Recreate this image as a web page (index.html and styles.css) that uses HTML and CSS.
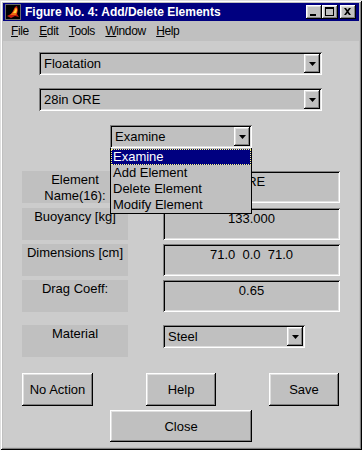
FILE: index.html
```html
<!DOCTYPE html>
<html lang="en">
<head>
    <meta charset="UTF-8">
    <title>Figure No. 4: Add/Delete Elements</title>
    <link rel="stylesheet" href="styles.css">
</head>
<body>
    <div class="window">
        <div class="titlebar">
            <svg class="app-icon" width="16" height="16" viewBox="0 0 16 16">
                <rect x="0.5" y="0.5" width="15" height="15" fill="#000" stroke="#6a6a6a"/>
                <polygon points="2,12 6,10 8,7 10,3 12,2 13,6 12,10 14,13 10,12 6,14" fill="#c81e10"/>
                <polygon points="5,11 8,8 10,4 12,4 12,8 11,11 8,11" fill="#f26a10"/>
                <polygon points="8,9 10,6 11,4 12,6 11,9" fill="#ffd23a"/>
            </svg>
            <span class="title">Figure No. 4: Add/Delete Elements</span>
            <div class="caption-btns">
                <span class="cap-btn">
                    <svg width="16" height="14" viewBox="0 0 16 14"><rect x="4" y="9" width="6" height="2" fill="#000"/></svg>
                </span>
                <span class="cap-btn">
                    <svg width="16" height="14" viewBox="0 0 16 14"><path d="M3 2h9v9h-9z M4 4v6h7v-6z" fill="#000" fill-rule="evenodd"/></svg>
                </span>
                <span class="cap-btn gap">
                    <svg width="16" height="14" viewBox="0 0 16 14"><path d="M4 3h2l1.5 2 1.5-2h2l-2.5 3.5 2.5 3.5h-2l-1.5-2-1.5 2h-2l2.5-3.5z" fill="#000"/></svg>
                </span>
            </div>
        </div>

        <div class="menubar">
            <span class="menu"><u>F</u>ile</span>
            <span class="menu"><u>E</u>dit</span>
            <span class="menu"><u>T</u>ools</span>
            <span class="menu"><u>W</u>indow</span>
            <span class="menu"><u>H</u>elp</span>
        </div>

        <div class="client">
            <div class="popup wide">
                <span class="popup-text">Floatation</span>
                <span class="popup-arrow"><svg width="7" height="4" viewBox="0 0 7 4"><polygon points="0,0 7,0 3.5,4" fill="#000"/></svg></span>
            </div>
            <div class="popup wide second">
                <span class="popup-text">28in ORE</span>
                <span class="popup-arrow"><svg width="7" height="4" viewBox="0 0 7 4"><polygon points="0,0 7,0 3.5,4" fill="#000"/></svg></span>
            </div>

            <div class="action-wrap">
                <div class="popup narrow">
                    <span class="popup-text">Examine</span>
                    <span class="popup-arrow"><svg width="7" height="4" viewBox="0 0 7 4"><polygon points="0,0 7,0 3.5,4" fill="#000"/></svg></span>
                </div>
                <ul class="popup-list">
                    <li class="selected">Examine</li>
                    <li>Add Element</li>
                    <li>Delete Element</li>
                    <li>Modify Element</li>
                </ul>
            </div>

            <div class="fields">
                <div class="field">
                    <div class="label">Element<br>Name(16):</div>
                    <div class="edit">28in ORE        </div>
                </div>
                <div class="field">
                    <div class="label">Buoyancy [kg]</div>
                    <div class="edit">133.000</div>
                </div>
                <div class="field">
                    <div class="label">Dimensions [cm]</div>
                    <div class="edit">71.0  0.0  71.0</div>
                </div>
                <div class="field">
                    <div class="label">Drag Coeff:</div>
                    <div class="edit">0.65</div>
                </div>
            </div>

            <div class="field material">
                <div class="label">Material</div>
                <div class="popup narrow">
                    <span class="popup-text">Steel</span>
                    <span class="popup-arrow"><svg width="7" height="4" viewBox="0 0 7 4"><polygon points="0,0 7,0 3.5,4" fill="#000"/></svg></span>
                </div>
            </div>

            <div class="buttons">
                <button class="push first">No Action</button>
                <button class="push">Help</button>
                <button class="push">Save</button>
            </div>
            <button class="push close">Close</button>
        </div>
    </div>
</body>
</html>
```

FILE: styles.css
```css
:root {
    --face: #c0c0c0;
    --figure: #cccccc;
    --shadow: #808080;
    --light: #dfdfdf;
    --navy: #000080;
}
* {
    box-sizing: border-box;
}
body {
    margin: 0;
    padding: 0;
    background: var(--face);
    font-family: 'Liberation Sans', Arial, sans-serif;
    font-size: 13px;
    color: #000;
}
.window {
    width: 362px;
    height: 450px;
    padding: 3px;
    display: flex;
    flex-direction: column;
    background: var(--face);
    box-shadow: inset 1px 1px var(--light), inset -1px -1px #000,
                inset 2px 2px #fff, inset -2px -2px var(--shadow);
}
.titlebar {
    height: 18px;
    background: var(--navy);
    color: #fff;
    display: flex;
    align-items: center;
    padding: 0 3px 0 2px;
}
.app-icon {
    display: block;
}
.title {
    margin-left: 4px;
    font-weight: 700;
    font-size: 12px;
    flex: 1;
    white-space: nowrap;
}
.caption-btns {
    display: flex;
}
.cap-btn {
    width: 16px;
    height: 14px;
    background: var(--face);
    box-shadow: inset -1px -1px #000, inset 1px 1px #fff,
                inset -2px -2px var(--shadow), inset 2px 2px var(--light);
}
.cap-btn svg {
    display: block;
}
.cap-btn.gap {
    margin-left: 2px;
}
.menubar {
    height: 20px;
    display: flex;
    align-items: center;
    gap: 10.5px;
    padding-left: 8px;
    font-size: 12px;
    letter-spacing: -0.4px;
}
.client {
    flex: 1;
    background: var(--figure);
    padding-top: 11px;
    display: flex;
    flex-direction: column;
    align-items: flex-start;
}

/* popup menus */
.popup {
    height: 23px;
    background: var(--face);
    display: flex;
    align-items: center;
    justify-content: space-between;
    padding: 2px 2px 2px 5px;
    box-shadow: inset 1px 1px var(--shadow), inset -1px -1px #fff,
                inset 2px 2px #000, inset -2px -2px var(--light);
}
.popup.wide {
    width: 283px;
    margin-left: 36px;
}
.popup.second {
    margin-top: 13px;
}
.popup.narrow {
    width: 142px;
}
.popup-arrow {
    width: 16px;
    height: 19px;
    display: flex;
    align-items: center;
    justify-content: center;
    background: var(--face);
    box-shadow: inset -1px -1px #000, inset 1px 1px #fff,
                inset -2px -2px var(--shadow), inset 2px 2px var(--light);
}
.popup-arrow svg {
    display: block;
}
.action-wrap {
    position: relative;
    margin: 14px 0 0 107px;
    z-index: 2;
}
.popup-list {
    position: absolute;
    top: 100%;
    left: 0;
    width: 142px;
    margin: 0;
    padding: 0;
    list-style: none;
    background: var(--face);
    border: 1px solid #000;
    border-top: none;
}
.popup-list li {
    height: 16px;
    line-height: 16px;
    padding-left: 2px;
    margin-top: 0;
}
.popup-list li.selected {
    background: var(--navy);
    color: #fff;
    margin-top: 1px;
    outline: 1px dotted #ffff80;
    outline-offset: -1px;
}

/* label + edit rows */
.fields {
    margin-top: 23px;
    display: flex;
    flex-direction: column;
    gap: 4px;
}
.fields .field:nth-child(2) {
    margin-top: 1px;
}
.field {
    display: flex;
    align-items: flex-start;
    gap: 35px;
    margin-left: 19px;
}
.label {
    width: 106px;
    height: 32px;
    background: var(--face);
    text-align: center;
    line-height: 16px;
    padding-top: 1px;
}
.edit {
    width: 177px;
    height: 32px;
    background: var(--face);
    text-align: center;
    white-space: pre;
    line-height: 16px;
    padding-top: 3px;
    box-shadow: inset 1px 1px var(--shadow), inset -1px -1px #fff,
                inset 2px 2px #000, inset -2px -2px var(--light);
}
.material {
    margin-top: 13px;
}

/* push buttons */
.buttons {
    margin: 16px 0 0 19px;
    display: flex;
    gap: 53px;
}
.push {
    width: 70px;
    height: 33px;
    border: none;
    padding: 0;
    background: var(--face);
    font-family: inherit;
    font-size: 13px;
    color: #000;
    box-shadow: inset -1px -1px #000, inset 1px 1px #fff,
                inset -2px -2px var(--shadow), inset 2px 2px var(--light);
}
.push.first {
    width: 71px;
}
.push.close {
    width: 142px;
    height: 32px;
    margin: 4px 0 0 107px;
}
```
